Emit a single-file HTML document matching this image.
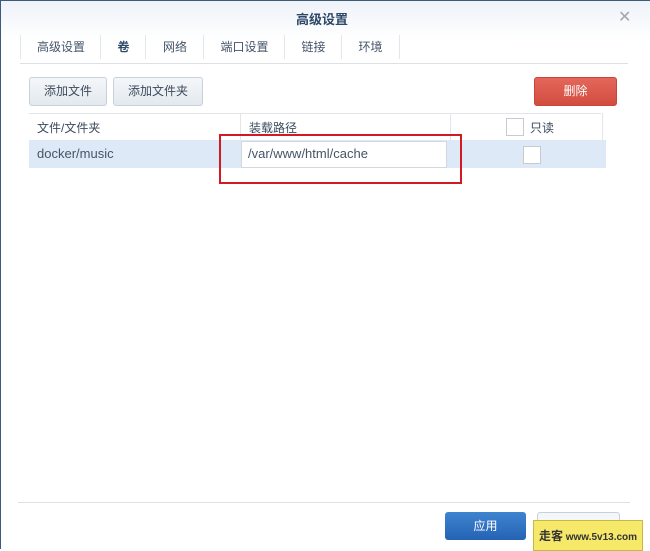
<!DOCTYPE html>
<html><head><meta charset="utf-8"><style>
body{margin:0;width:650px;height:549px;overflow:hidden;background:#fff;font-family:"Liberation Sans","Noto Sans CJK SC",sans-serif;font-size:12px;color:#3a4a5c;position:relative}
.a{position:absolute}
.top{left:0;top:0;width:650px;height:40px;background:linear-gradient(#eef3f8,#fff);border-top:1px solid #3d5a7a}
.tab{position:absolute;top:35px;height:24px;line-height:24px;font-size:12px;color:#44556a;text-align:center;border-left:1px solid #e3e6ea}
.btn{position:absolute;border:1px solid #c8d0d8;border-radius:3px;background:linear-gradient(#f4f7fa,#e3e9ef);text-align:center;line-height:27px;font-size:12px;color:#3d4a58}
.cb{position:absolute;width:16px;height:16px;border:1px solid #c6cbd1;background:#fff}
</style></head><body>
<div class="a top"></div>
<div class="a" style="left:0;top:0;width:1px;height:549px;background:#3d5a7a"></div>
<div class="a" style="left:296px;top:9px;font-weight:bold;font-size:13px;color:#2d4868">高级设置</div>
<div class="a" style="left:618px;top:7px;font-size:16px;color:#a0a7ae">✕</div>
<div class="tab" style="left:20px;width:80px;">高级设置</div>
<div class="tab" style="left:100px;width:45px;font-weight:bold;color:#2d4868">卷</div>
<div class="tab" style="left:145px;width:58px;">网络</div>
<div class="tab" style="left:203px;width:81px;">端口设置</div>
<div class="tab" style="left:284px;width:57px;">链接</div>
<div class="tab" style="left:341px;width:57px;border-right:1px solid #e3e6ea">环境</div>
<div class="a" style="left:20px;top:63px;width:608px;height:1px;background:#dde1e6"></div>
<div class="btn" style="left:29px;top:77px;width:76px;">添加文件</div>
<div class="btn" style="left:113px;top:77px;width:88px;">添加文件夹</div>
<div class="a" style="left:534px;top:77px;width:81px;height:27px;border-radius:3px;background:linear-gradient(#e4665a,#d24d40);border:1px solid #c84538;color:#fff;text-align:center;line-height:27px">删除</div>
<div class="a" style="left:29px;top:113px;width:572px;height:1px;background:#e2e6ea"></div>
<div class="a" style="left:240px;top:113px;width:1px;height:27px;background:#e2e6ea"></div>
<div class="a" style="left:450px;top:113px;width:1px;height:27px;background:#e2e6ea"></div>
<div class="a" style="left:602px;top:113px;width:1px;height:27px;background:#e2e6ea"></div>
<div class="a" style="left:37px;top:119px;">文件/文件夹</div>
<div class="a" style="left:249px;top:119px;">装载路径</div>
<div class="cb" style="left:506px;top:118px"></div>
<div class="a" style="left:530px;top:119px;">只读</div>
<div class="a" style="left:29px;top:140px;width:577px;height:28px;background:#dde9f7"></div>
<div class="a" style="left:37px;top:146px;font-size:13px;color:#445566">docker/music</div>
<div class="a" style="left:241px;top:141px;width:204px;height:25px;background:#fff;border:1px solid #d3d8de"></div>
<div class="a" style="left:248px;top:146px;font-size:13px;color:#445566">/var/www/html/cache</div>
<div class="cb" style="left:523px;top:146px"></div>
<div class="a" style="left:219px;top:134px;width:239px;height:46px;border:2px solid #d21a22"></div>
<div class="a" style="left:18px;top:502px;width:612px;height:1px;background:#dde1e6"></div>
<div class="a" style="left:445px;top:512px;width:81px;height:28px;border-radius:3px;background:linear-gradient(#3f84cf,#2563b5);color:#fff;text-align:center;line-height:28px">应用</div>
<div class="a" style="left:537px;top:512px;width:81px;height:28px;border-radius:3px;border:1px solid #c8d0d8;background:#f4f7fa;color:#999;text-align:center;line-height:28px">取消</div>
<div class="a" style="left:533px;top:520px;width:108px;height:29px;background:#f6e869;border:1px solid #c9b848;font-size:10px;color:#333;line-height:30px;text-align:center;font-weight:bold;white-space:nowrap;overflow:hidden"><span style="font-size:12px">走客</span> www.5v13.com</div>
</body></html>
